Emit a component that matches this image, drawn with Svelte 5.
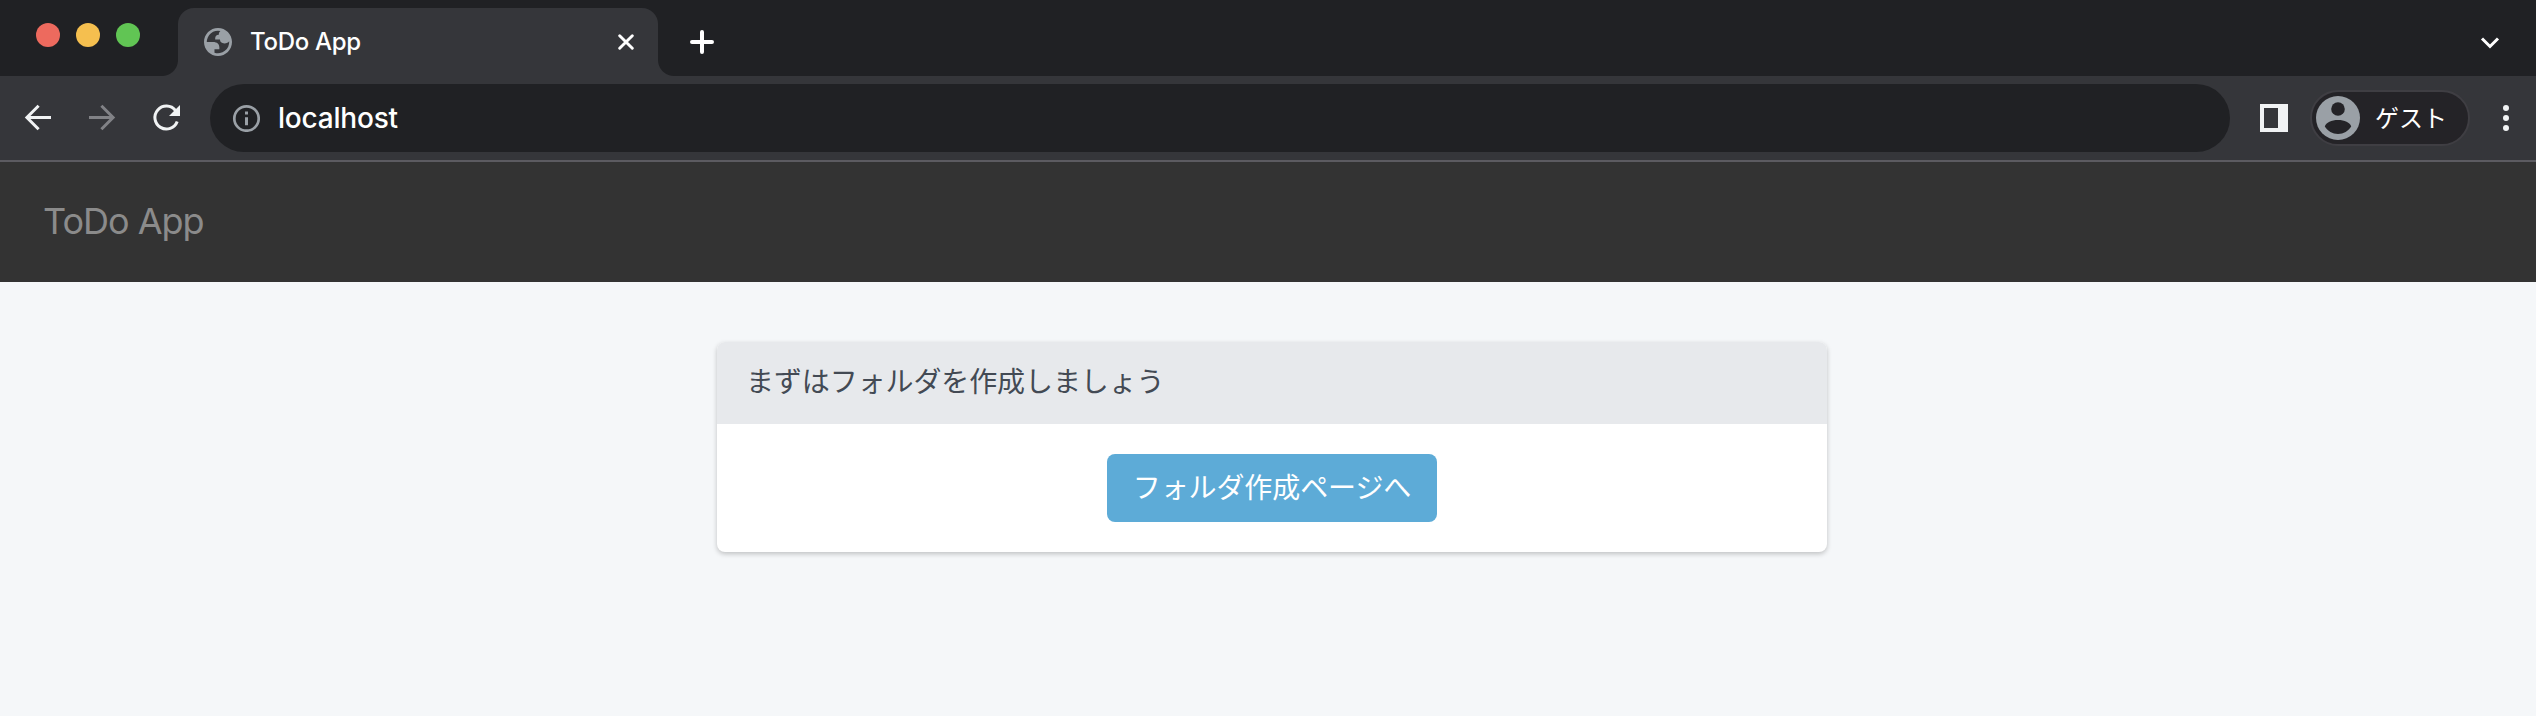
<script>
  const lights = ['#ed6a5e', '#f5bf4f', '#61c554'];
</script>

<div class="window">
  <div class="tabstrip">
    <div class="lights">
      {#each lights as color}
        <span class="light" style="background: {color}"></span>
      {/each}
    </div>
    <div class="tab">
      <svg class="globe" width="28" height="28" viewBox="2 2 20 20" fill="#9aa0a6" fill-rule="evenodd">
        <path d="M12 2C6.480 2 2 6.480 2 12s4.480 10 10 10 10-4.480 10-10S17.520 2 12 2zM4 12h4.400c3.407.022 4.922 1.730 4.543 5.127H9.488v2.470a8.004 8.004 0 0 0 10.498-8.083C19.327 12.504 18.200 13 16.607 13c-2.127 0-3.190-.900-3.190-2.700h-3.410c-.235-2.280.617-3.420 2.555-3.420 0-1.300.400-2.100 1.150-2.690A8 8 0 0 0 4 12z" />
      </svg>
      <span class="tab-title">ToDo App</span>
      <svg class="close" width="16" height="16" viewBox="0 0 16 16" fill="none" stroke="#fff" stroke-width="2.9" stroke-linecap="round">
        <path d="M1.700 1.700 14.300 14.300M14.300 1.700 1.700 14.300" />
      </svg>
    </div>
    <svg class="plus" width="24" height="24" viewBox="0 0 24 24" fill="none" stroke="#fff" stroke-width="4" stroke-linecap="round">
      <path d="M12 2v20M2 12h20" />
    </svg>
    <svg class="chevron" width="20" height="14" viewBox="0 0 20 14" fill="none" stroke="#fff" stroke-width="3">
      <path d="M2 2.500 10 10.500 18 2.500" />
    </svg>
  </div>

  <div class="toolbar">
    <div class="nav-icons">
      <svg width="28" height="28" viewBox="0 0 28 28" fill="none" stroke="#f1f3f4" stroke-width="3">
        <path d="M27 13.500H3M14.600 1.800 2.900 13.500l11.700 11.700" />
      </svg>
      <svg width="28" height="28" viewBox="0 0 28 28" fill="none" stroke="#818286" stroke-width="3">
        <path d="M1 13.500h24M13.400 1.800 25.100 13.500 13.400 25.200" />
      </svg>
      <svg width="28" height="28" viewBox="0 0 28 28" fill="none">
        <path d="M23.500 6.500A11.500 11.500 0 1 0 25.200 17.500" stroke="#f1f3f4" stroke-width="3" />
        <path d="M28 1v11H17z" fill="#f1f3f4" />
      </svg>
    </div>
    <div class="omnibox">
      <svg width="28" height="28" viewBox="0 0 28 28" fill="none" stroke="#9aa0a6">
        <circle cx="14.500" cy="14.500" r="12.200" stroke-width="2.700" />
        <path d="M14.500 13.200v8M14.500 7.500v3" stroke-width="3" />
      </svg>
      <span class="url">localhost</span>
    </div>
    <svg class="panel" width="28" height="28" viewBox="0 0 28 28">
      <path d="M0 0h28v28H0zM4 4v20h14V4z" fill="#f1f3f4" fill-rule="evenodd" />
    </svg>
    <div class="profile">
      <svg width="44" height="44" viewBox="0 0 44 44">
        <circle cx="22" cy="22" r="22" fill="#9aa0a6" />
        <circle cx="22" cy="13" r="6.800" fill="#242327" />
        <path d="M8.800 30.500C10 26.500 15.500 24 22 24s12 2.500 13.200 6.500C32.500 35 27.500 38 22 38S11.500 35 8.800 30.500z" fill="#242327" />
      </svg>
      <span>ゲスト</span>
    </div>
    <svg class="dots" width="6" height="26" viewBox="0 0 6 26" fill="#f1f3f4">
      <circle cx="3" cy="3" r="3" />
      <circle cx="3" cy="13" r="3" />
      <circle cx="3" cy="23" r="3" />
    </svg>
  </div>

  <header class="navbar"><span class="brand">ToDo App</span></header>

  <main>
    <section class="card">
      <div class="card-head"><span>まずはフォルダを作成しましょう</span></div>
      <div class="card-body">
        <button>フォルダ作成ページへ</button>
      </div>
    </section>
  </main>
</div>

<style>
  :global(body) {
    margin: 0;
    background: #f5f7f9;
  }
  .window {
    width: 2536px;
    height: 716px;
    overflow: hidden;
    display: flex;
    flex-direction: column;
    background: #f5f7f9;
    font-family: Inter, 'Noto Sans CJK JP', sans-serif;
  }
  .window :is(svg, span) {
    flex: none;
    display: block;
    white-space: nowrap;
  }
  .tabstrip {
    height: 76px;
    box-sizing: border-box;
    padding-top: 8px;
    background: #202124;
    display: flex;
  }
  .lights {
    display: flex;
    gap: 16px;
    padding: 15px 0 0 36px;
    width: 142px;
    box-sizing: content-box;
  }
  .light {
    width: 24px;
    height: 24px;
    border-radius: 50%;
  }
  .tab {
    position: relative;
    width: 480px;
    height: 68px;
    box-sizing: border-box;
    border-radius: 16px 16px 0 0;
    background: #35363a;
    display: flex;
    align-items: center;
    padding: 0 24px 0 26px;
    color: #fff;
  }
  .tab::before,
  .tab::after {
    content: '';
    position: absolute;
    bottom: 0;
    width: 16px;
    height: 16px;
  }
  .tab::before {
    left: -16px;
    background: radial-gradient(circle at 0 0, transparent 15.500px, #35363a 16.500px);
  }
  .tab::after {
    right: -16px;
    background: radial-gradient(circle at 100% 0, transparent 15.500px, #35363a 16.500px);
  }
  .tab-title {
    margin-left: 18px;
    font-size: 24px;
    font-weight: 450;
    line-height: 68px;
    letter-spacing: -0.3px;
  }
  .close {
    margin-left: auto;
  }
  .plus {
    margin: 22px 0 0 32px;
  }
  .chevron {
    margin: 28px 36px 0 auto;
  }
  .toolbar {
    height: 86px;
    box-sizing: border-box;
    border-bottom: 2px solid #5c5b61;
    background: #35363a;
    display: flex;
    align-items: center;
  }
  .nav-icons {
    display: flex;
    gap: 36px;
    padding-left: 24px;
    width: 186px;
  }
  .omnibox {
    width: 2020px;
    height: 68px;
    box-sizing: border-box;
    border-radius: 34px;
    background: #202124;
    display: flex;
    align-items: center;
    padding-left: 22px;
    color: #fff;
  }
  .url {
    margin-left: 18px;
    font-size: 28px;
    font-weight: 450;
    letter-spacing: -0.2px;
  }
  .panel {
    margin-left: 30px;
  }
  .profile {
    width: 160px;
    height: 56px;
    margin-left: 22px;
    box-sizing: border-box;
    border: 2px solid #3f3e43;
    border-radius: 28px;
    background: #242327;
    display: flex;
    align-items: center;
    padding-left: 4px;
    color: #fff;
  }
  .profile span {
    margin-left: 15px;
    padding-top: 2px;
    font-size: 24px;
    line-height: 50px;
  }
  .dots {
    margin-left: 33px;
  }
  .navbar {
    height: 120px;
    background: #333;
    display: flex;
    align-items: center;
    padding-left: 43px;
    color: #8b8b8b;
  }
  .brand {
    font-size: 36px;
    line-height: 44px;
    padding-bottom: 2px;
    letter-spacing: -1px;
  }
  main {
    padding-top: 60px;
  }
  .card {
    width: 1110px;
    height: 210px;
    margin-left: 717px;
    border-radius: 8px;
    background: #fff;
    box-shadow: 0 2px 5px rgba(0, 0, 0, 0.22);
    overflow: hidden;
  }
  .card-head {
    height: 82px;
    box-sizing: border-box;
    background: #e7e9ec;
    color: #434a54;
    padding-left: 29px;
    font-size: 28px;
    line-height: 80px;
    letter-spacing: -0.1px;
  }
  .card-body {
    padding-top: 30px;
    display: flex;
    justify-content: center;
  }
  button {
    width: 330px;
    height: 68px;
    padding: 0;
    border: 0;
    border-radius: 8px;
    background: #5dabd7;
    color: #fff;
    font: 28px/68px Inter, 'Noto Sans CJK JP', sans-serif;
    letter-spacing: -0.1px;
  }
</style>
